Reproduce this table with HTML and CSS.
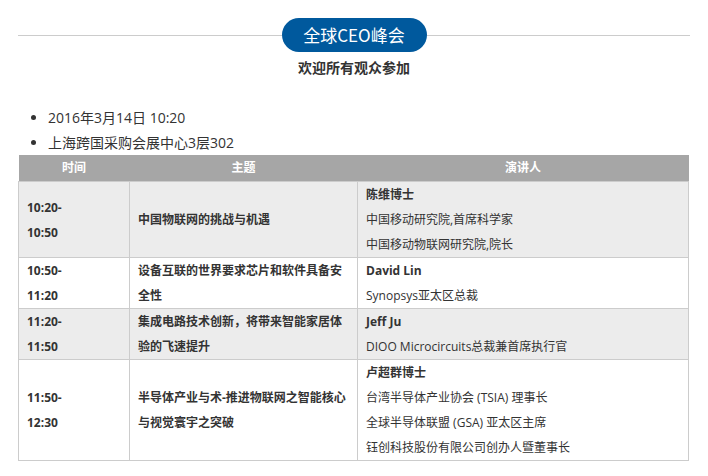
FILE: index.html
```html
<!DOCTYPE html>
<html lang="zh-CN">
<head>
<meta charset="utf-8">
<title>全球CEO峰会</title>
<link rel="stylesheet" href="styles.css">
</head>
<body>
<div class="page">
  <div class="title-row">
    <span class="line"></span>
    <h1 class="pill">全球CEO峰会</h1>
    <span class="line"></span>
  </div>
  <p class="subtitle">欢迎所有观众参加</p>
  <ul class="info">
    <li>2016年3月14日 10:20</li>
    <li>上海跨国采购会展中心3层302</li>
  </ul>
  <table class="agenda">
    <colgroup>
      <col class="c-time">
      <col class="c-topic">
      <col class="c-speaker">
    </colgroup>
    <thead>
      <tr><th>时间</th><th>主题</th><th>演讲人</th></tr>
    </thead>
    <tbody>
      <tr class="alt">
        <td class="time">10:20-<br>10:50</td>
        <td class="topic">中国物联网的挑战与机遇</td>
        <td class="speaker"><div class="name">陈维博士</div><div>中国移动研究院,首席科学家</div><div>中国移动物联网研究院,院长</div></td>
      </tr>
      <tr>
        <td class="time">10:50-<br>11:20</td>
        <td class="topic">设备互联的世界要求芯片和软件具备安全性</td>
        <td class="speaker"><div class="name">David Lin</div><div>Synopsys亚太区总裁</div></td>
      </tr>
      <tr class="alt">
        <td class="time">11:20-<br>11:50</td>
        <td class="topic">集成电路技术创新，将带来智能家居体验的飞速提升</td>
        <td class="speaker"><div class="name">Jeff Ju</div><div>DIOO Microcircuits总裁兼首席执行官</div></td>
      </tr>
      <tr>
        <td class="time">11:50-<br>12:30</td>
        <td class="topic">半导体产业与术-推进物联网之智能核心与视觉寰宇之突破</td>
        <td class="speaker"><div class="name">卢超群博士</div><div>台湾半导体产业协会 (TSIA) 理事长</div><div>全球半导体联盟 (GSA) 亚太区主席</div><div>钰创科技股份有限公司创办人暨董事长</div></td>
      </tr>
    </tbody>
  </table>
</div>
</body>
</html>
```

FILE: styles.css
```css
* { box-sizing: border-box; }
html, body { margin: 0; padding: 0; background: #fff; }
body {
  font-family: "Open Sans", "Noto Sans CJK SC", sans-serif;
  color: #333;
}
.page {
  padding: 18px 18px 0 18px;
}
.title-row {
  display: flex;
  align-items: center;
}
.line {
  flex: 1;
  height: 1px;
  background: #cccccc;
}
.pill {
  margin: 0;
  width: 145px;
  height: 34px;
  border-radius: 17px;
  background: #00599d;
  color: #fff;
  font-family: "Noto Sans CJK SC", sans-serif;
  font-weight: 400;
  font-size: 17px;
  line-height: 34px;
  text-align: center;
}
.subtitle {
  margin: 5px 0 0;
  text-align: center;
  font-family: "Noto Sans CJK SC", sans-serif;
  font-weight: 700;
  font-size: 14px;
  line-height: 20px;
  color: #333;
}
.info {
  margin: 28px 0 0;
  padding-left: 30px;
  font-size: 14px;
  line-height: 25px;
  color: #333;
}
.agenda {
  width: 670px;
  border-collapse: collapse;
  font-size: 12px;
  line-height: 25px;
  table-layout: fixed;
}
.c-time { width: 111px; }
.c-topic { width: 228px; }
.c-speaker { width: 331px; }
.agenda th {
  background: #a6a6a6;
  color: #fff;
  font-weight: 700;
  height: 26px;
  padding: 0;
  line-height: 26px;
  text-align: center;
}
.agenda td {
  border: 1px solid #cccccc;
  padding: 0 8px;
  vertical-align: middle;
}
.agenda tr.alt td { background: #ececec; }
.time { font-weight: 700; }
.topic { font-weight: 700; padding-left: 8px; }
.speaker { padding-left: 8px; }
.speaker .name { font-weight: 700; }
```
